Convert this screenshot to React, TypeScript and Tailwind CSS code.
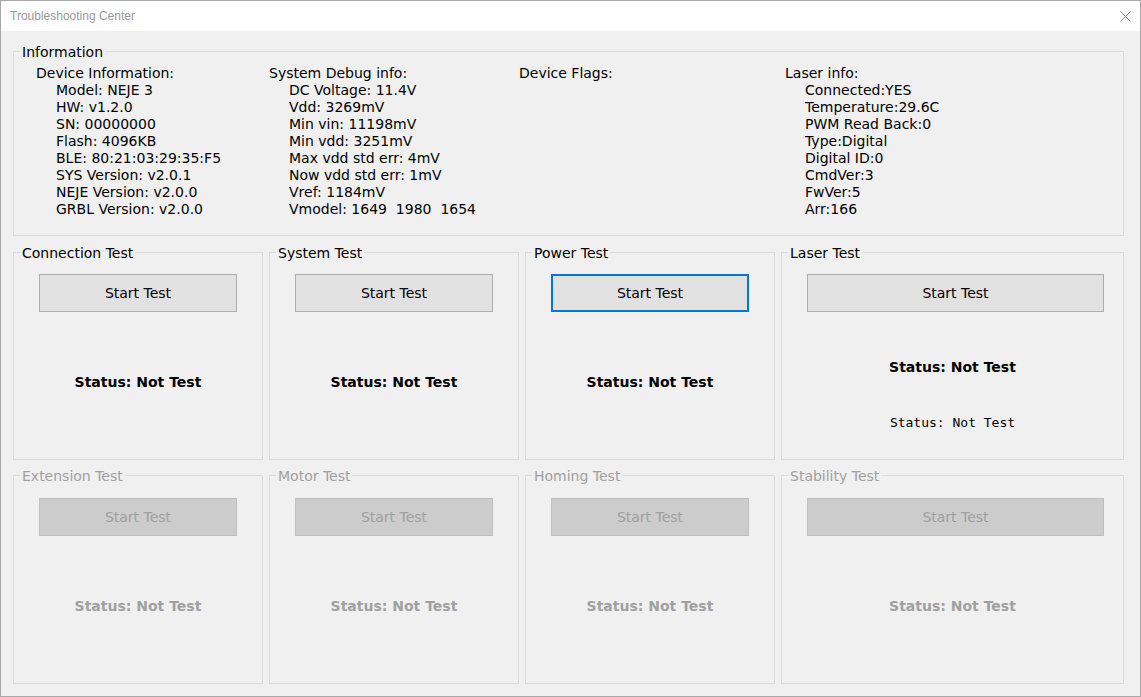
import React from "react";

const device = [
  "Model: NEJE 3",
  "HW: v1.2.0",
  "SN: 00000000",
  "Flash: 4096KB",
  "BLE: 80:21:03:29:35:F5",
  "SYS Version: v2.0.1",
  "NEJE Version: v2.0.0",
  "GRBL Version: v2.0.0",
];

const debug = [
  "DC Voltage: 11.4V",
  "Vdd: 3269mV",
  "Min vin: 11198mV",
  "Min vdd: 3251mV",
  "Max vdd std err: 4mV",
  "Now vdd std err: 1mV",
  "Vref: 1184mV",
  "Vmodel: 1649\u00a0\u00a01980\u00a0\u00a01654",
];

const laser = [
  "Connected:YES",
  "Temperature:29.6C",
  "PWM Read Back:0",
  "Type:Digital",
  "Digital ID:0",
  "CmdVer:3",
  "FwVer:5",
  "Arr:166",
];

function InfoColumn({ title, items, width }: { title: string; items: string[]; width?: string }) {
  return (
    <div className={width ?? "flex-1"}>
      <div>{title}</div>
      <div className="pl-[20px]">
        {items.map((t) => (
          <div key={t} className="whitespace-pre">{t}</div>
        ))}
      </div>
    </div>
  );
}

interface TestProps {
  title: string;
  disabled?: boolean;
  focused?: boolean;
  wide?: boolean;
  height: string;
  lower?: boolean;
}

function TestBox({ title, disabled, focused, wide, height, lower }: TestProps) {
  const muted = disabled ? "text-[#a0a0a0]" : "text-black";
  return (
    <fieldset
      className={`${wide ? "flex-1" : "w-[250px]"} ${height} border border-[#dcdcdc] flex flex-col items-start`}
    >
      <legend className={`ml-[6px] px-[2px] ${muted}`}>
        <span className="inline-block translate-y-[1px]">{title}</span>
      </legend>
      <button
        className={`ml-[25px] ${lower ? "mt-[14px]" : "mt-[13px]"} h-[38px] ${wide ? "w-[297px]" : "w-[198px]"} ${
          disabled
            ? "bg-[#cccccc] border border-[#bfbfbf] text-[#a0a0a0]"
            : focused
            ? "bg-[#e1e1e1] border-2 border-[#0078d7] text-black"
            : "bg-[#e1e1e1] border border-[#adadad] text-black"
        }`}
      >
        Start Test
      </button>
      {wide && !disabled ? (
        <div className="w-full flex flex-col items-center">
          <div className="mt-[47px] font-bold">Status: Not Test</div>
          <div className="mt-[38px] text-[13px] font-['DejaVu_Sans_Mono','Liberation_Mono',monospace]">
            Status: Not Test
          </div>
        </div>
      ) : (
        <div className={`w-full text-center mt-[62px] font-bold ${muted}`}>Status: Not Test</div>
      )}
    </fieldset>
  );
}

export default function App() {
  return (
    <div className="w-[1141px] h-[697px] border border-[#a8a8a8] bg-[#f0f0f0] flex flex-col font-['DejaVu_Sans','Liberation_Sans',sans-serif] text-[14px] leading-[17px] text-black">
      {/* title bar */}
      <div className="h-[30px] bg-white flex items-center justify-between pl-[9px] pr-[9px]">
        <span className="text-[12px] text-[#999999] font-['Liberation_Sans',sans-serif]">
          Troubleshooting Center
        </span>
        <svg width="11" height="11" viewBox="0 0 11 11">
          <path d="M0.5 0.5 L10.5 10.5 M10.5 0.5 L0.5 10.5" stroke="#8a8a8a" strokeWidth="1" fill="none" />
        </svg>
      </div>

      <div className="flex-1 pl-[12px] pr-[16px] pt-[12px] flex flex-col">
        <fieldset className="h-[193px] border border-[#dcdcdc]">
          <legend className="ml-[6px] px-[2px]">
            <span className="inline-block translate-y-[1px]">Information</span>
          </legend>
          <div className="mt-[5px] pl-[22px] flex">
            <InfoColumn title="Device Information:" items={device} width="w-[233px] shrink-0" />
            <InfoColumn title="System Debug info:" items={debug} width="w-[250px] shrink-0" />
            <InfoColumn title="Device Flags:" items={[]} width="w-[266px] shrink-0" />
            <InfoColumn title="Laser info:" items={laser} />
          </div>
        </fieldset>

        <div className="mt-[8px] flex gap-[6px]">
          <TestBox title="Connection Test" height="h-[216px]" />
          <TestBox title="System Test" height="h-[216px]" />
          <TestBox title="Power Test" focused height="h-[216px]" />
          <TestBox title="Laser Test" wide height="h-[216px]" />
        </div>

        <div className="mt-[7px] flex gap-[6px]">
          <TestBox title="Extension Test" disabled lower height="h-[217px]" />
          <TestBox title="Motor Test" disabled lower height="h-[217px]" />
          <TestBox title="Homing Test" disabled lower height="h-[217px]" />
          <TestBox title="Stability Test" disabled wide lower height="h-[217px]" />
        </div>
      </div>
    </div>
  );
}
